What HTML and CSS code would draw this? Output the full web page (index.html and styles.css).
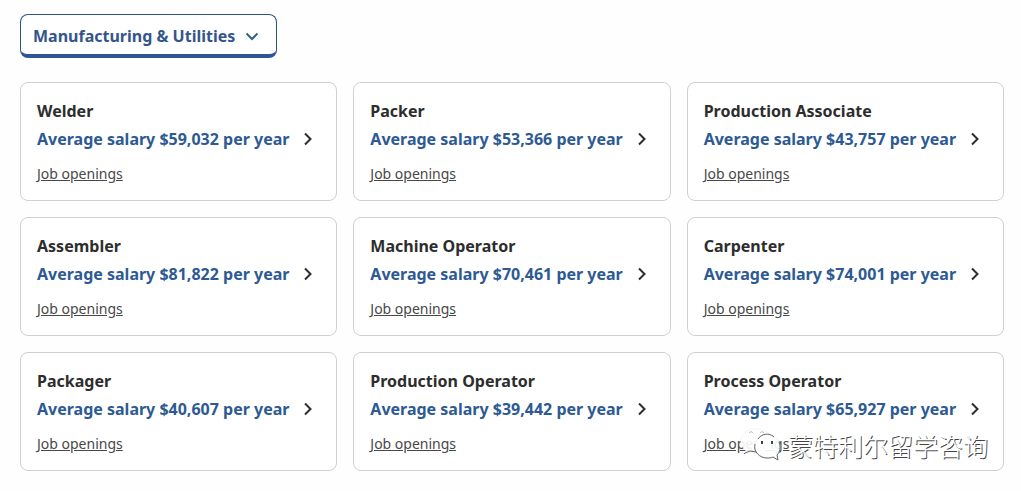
FILE: index.html
```html
<!DOCTYPE html>
<html lang="en">

<head>
  <meta charset="UTF-8">
  <meta name="viewport" content="width=device-width, initial-scale=1.0">
  <title>Manufacturing &amp; Utilities salaries</title>
  <link rel="stylesheet" href="styles.css">
</head>

<body>
  <div class="industry">
    <select id="industry" aria-label="Industry">
      <option>Manufacturing &amp; Utilities</option>
    </select>
    <svg class="arrow-down" viewBox="0 0 14 14" aria-hidden="true"><path d="M1.500 4.500L7 10l5.500-5.500"/></svg>
  </div>

  <main class="jobs">
    <div class="card">
      <h2>Welder</h2>
      <a class="salary" href="#">Average salary $59,032 per year <svg viewBox="0 0 14 14" aria-hidden="true"><path d="M4 1.500L9.500 7 4 12.500"/></svg></a>
      <a class="openings" href="#">Job openings</a>
    </div>
    <div class="card">
      <h2>Packer</h2>
      <a class="salary" href="#">Average salary $53,366 per year <svg viewBox="0 0 14 14" aria-hidden="true"><path d="M4 1.500L9.500 7 4 12.500"/></svg></a>
      <a class="openings" href="#">Job openings</a>
    </div>
    <div class="card">
      <h2>Production Associate</h2>
      <a class="salary" href="#">Average salary $43,757 per year <svg viewBox="0 0 14 14" aria-hidden="true"><path d="M4 1.500L9.500 7 4 12.500"/></svg></a>
      <a class="openings" href="#">Job openings</a>
    </div>
    <div class="card">
      <h2>Assembler</h2>
      <a class="salary" href="#">Average salary $81,822 per year <svg viewBox="0 0 14 14" aria-hidden="true"><path d="M4 1.500L9.500 7 4 12.500"/></svg></a>
      <a class="openings" href="#">Job openings</a>
    </div>
    <div class="card">
      <h2>Machine Operator</h2>
      <a class="salary" href="#">Average salary $70,461 per year <svg viewBox="0 0 14 14" aria-hidden="true"><path d="M4 1.500L9.500 7 4 12.500"/></svg></a>
      <a class="openings" href="#">Job openings</a>
    </div>
    <div class="card">
      <h2>Carpenter</h2>
      <a class="salary" href="#">Average salary $74,001 per year <svg viewBox="0 0 14 14" aria-hidden="true"><path d="M4 1.500L9.500 7 4 12.500"/></svg></a>
      <a class="openings" href="#">Job openings</a>
    </div>
    <div class="card">
      <h2>Packager</h2>
      <a class="salary" href="#">Average salary $40,607 per year <svg viewBox="0 0 14 14" aria-hidden="true"><path d="M4 1.500L9.500 7 4 12.500"/></svg></a>
      <a class="openings" href="#">Job openings</a>
    </div>
    <div class="card">
      <h2>Production Operator</h2>
      <a class="salary" href="#">Average salary $39,442 per year <svg viewBox="0 0 14 14" aria-hidden="true"><path d="M4 1.500L9.500 7 4 12.500"/></svg></a>
      <a class="openings" href="#">Job openings</a>
    </div>
    <div class="card">
      <h2>Process Operator</h2>
      <a class="salary" href="#">Average salary $65,927 per year <svg viewBox="0 0 14 14" aria-hidden="true"><path d="M4 1.500L9.500 7 4 12.500"/></svg></a>
      <a class="openings" href="#">Job openings</a>
    </div>

    <div class="watermark" lang="zh">
      <svg viewBox="0 0 42 34" aria-hidden="true">
        <path class="bubble" d="M16 1C7 1 1 6 1 13c0 4 2 7 5 9l-2 5 6-3c3 1 8 1 11 0 7-2 11-6 11-11C32 6 25 1 16 1z"/>
        <path class="edge" d="M4 26l1-1 5-2 6 1"/>
        <path class="eye" d="M9 5q2-3 4 0M20 5q2-3 4 0"/>
        <path class="bubble" d="M27 7c-7 0-12 5-12 11s5 12 12 12c2 0 4 0 6-1l5 3-1-5c2-2 3-5 3-8 0-7-6-12-13-12z"/>
        <path class="edge" d="M18 11c3-5 11-7 16-2M15 16c-2 8 5 14 12 14 2 0 4 0 6-1l5 3-1-5c3-3 4-8 2-13"/>
        <path class="dot" d="M22 13v3M32 13v3"/>
      </svg>
      <span>蒙特利尔留学咨询</span>
    </div>
  </main>
</body>

</html>
```
FILE: styles.css
```css
* {
  box-sizing: border-box;
}

body {
  margin: 0;
  padding: 14px 17px 20px 20px;
  background-color: #fefefe;
  color: #2d2d2d;
  font-family: "Noto Sans", sans-serif;
  font-size: 16px;
}

.industry {
  position: relative;
  width: fit-content;
  margin-bottom: 24px;
}

.industry select {
  display: block;
  height: 44px;
  padding: 2px 40px 0 12px;
  border: 1px solid #2d5580;
  border-bottom: 4px solid #2f5597;
  border-radius: 8px;
  background-color: #fff;
  color: #34558b;
  font: inherit;
  font-weight: bold;
  appearance: none;
  cursor: pointer;
}

svg {
  fill: none;
  stroke: currentColor;
  stroke-width: 2;
}

.arrow-down {
  position: absolute;
  top: 15px;
  right: 18px;
  width: 14px;
  height: 14px;
  color: #34607f;
  pointer-events: none;
}

.jobs {
  position: relative;
  display: grid;
  grid-template-columns: repeat(3, 1fr);
  gap: 16px;
}

.card {
  padding: 14px 15px 15px 16px;
  border: 1px solid #d0d0d0;
  border-radius: 8px;
  background-color: #fff;
}

.card h2 {
  margin: 0;
  font-size: 16px;
  line-height: 28px;
}

.salary {
  display: flex;
  align-items: center;
  justify-content: space-between;
  margin-bottom: 10px;
  padding-right: 6px;
  color: #2d5a93;
  font-weight: bold;
  line-height: 28px;
  text-decoration: none;
  white-space: nowrap;
}

.salary svg {
  width: 14px;
  height: 14px;
  color: #2d2d2d;
}

.openings {
  display: block;
  width: fit-content;
  color: #484848;
  font-size: 14px;
  line-height: 22px;
}

.watermark {
  position: absolute;
  right: 16px;
  bottom: 9px;
  display: flex;
  align-items: center;
  gap: 6px;
  color: #fff;
  font-family: "Noto Sans CJK SC", sans-serif;
  font-size: 25px;
  font-weight: 300;
  line-height: 34px;
  text-shadow: 1px 1px 0 #444;
  pointer-events: none;
}

.watermark svg {
  width: 42px;
  height: 34px;
  stroke-width: 1;
}

.watermark .bubble {
  fill: #fff;
  fill-opacity: 0.9;
  stroke: #f4f4f4;
}

.watermark .edge {
  stroke: #666;
}

.watermark .eye {
  stroke: #bbb;
}

.watermark .dot {
  stroke: #444;
  stroke-width: 2;
}
```
